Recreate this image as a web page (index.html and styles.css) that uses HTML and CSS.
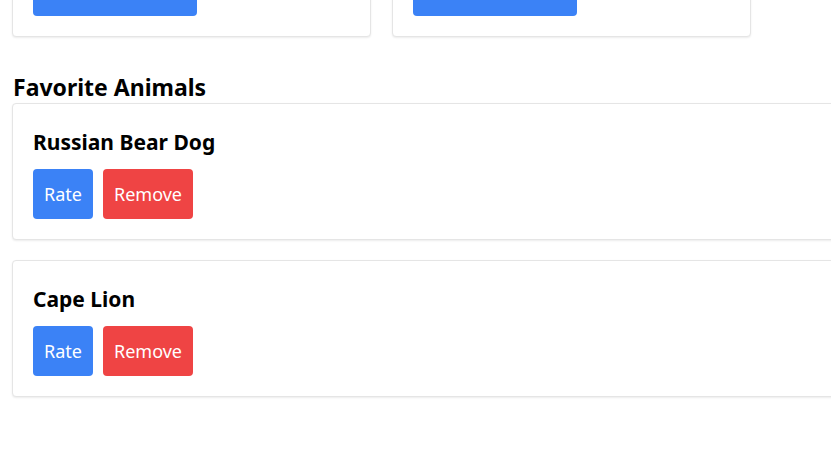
FILE: index.html
```html
<!DOCTYPE html>
<html lang="en">
<head>
<meta charset="utf-8">
<title>Animals</title>
<link rel="stylesheet" href="styles.css">
</head>
<body>
<main class="page">
  <h2 class="section-title">Animals</h2>
  <div class="animal-grid">
    <div class="card">
      <h3 class="card-title">Russian Bear Dog</h3>
      <button class="btn btn-blue btn-wide">Add to Favorites</button>
    </div>
    <div class="card">
      <h3 class="card-title">Cape Lion</h3>
      <button class="btn btn-blue btn-wide">Add to Favorites</button>
    </div>
  </div>

  <h2 class="section-title fav-title">Favorite Animals</h2>
  <div class="fav-list">
    <div class="card fav-card">
      <h3 class="card-title">Russian Bear Dog</h3>
      <div class="actions">
        <button class="btn btn-blue">Rate</button>
        <button class="btn btn-red">Remove</button>
      </div>
    </div>
    <div class="card fav-card">
      <h3 class="card-title">Cape Lion</h3>
      <div class="actions">
        <button class="btn btn-blue">Rate</button>
        <button class="btn btn-red">Remove</button>
      </div>
    </div>
  </div>
</main>
<script src="script.js"></script>
</body>
</html>
```

FILE: styles.css
```css
html {
  overflow-x: hidden;
}
body {
  margin: 0;
  background: #ffffff;
  font-family: "Segoe UI", "Noto Sans", "Open Sans", sans-serif;
  color: #000;
}
.page {
  padding: 20px 12px 60px 12px;
}
.section-title {
  font-size: 23px;
  line-height: 32px;
  font-weight: 700;
  margin: 0 0 0 1px;
}
.fav-title {
  margin-top: 34px;
}
.animal-grid {
  display: flex;
  gap: 21px;
}
.animal-grid .card {
  width: 359px;
}
.card {
  box-sizing: border-box;
  background: #fff;
  border: 1px solid #e5e5e5;
  border-radius: 4px;
  box-shadow: 0 1px 2px rgba(0, 0, 0, 0.08);
  padding: 20px;
}
.card-title {
  font-size: 21px;
  line-height: 28px;
  font-weight: 700;
  margin: 4px 0 13px 0;
}
.fav-list {
  display: flex;
  flex-direction: column;
  gap: 20px;
}
.fav-card {
  width: 900px;
}
.actions {
  display: flex;
  gap: 10px;
}
.btn {
  border: none;
  border-radius: 4px;
  color: #fff;
  font-family: inherit;
  font-size: 18px;
  line-height: 26px;
  padding: 12px 11px;
  cursor: pointer;
}
.btn-blue {
  background: #3b82f6;
}
.btn-red {
  background: #ef4444;
}
.btn-wide {
  width: 164px;
  height: 56px;
}
```

FILE: script.js
```js
window.scrollTo(0, document.documentElement.scrollHeight);
```
